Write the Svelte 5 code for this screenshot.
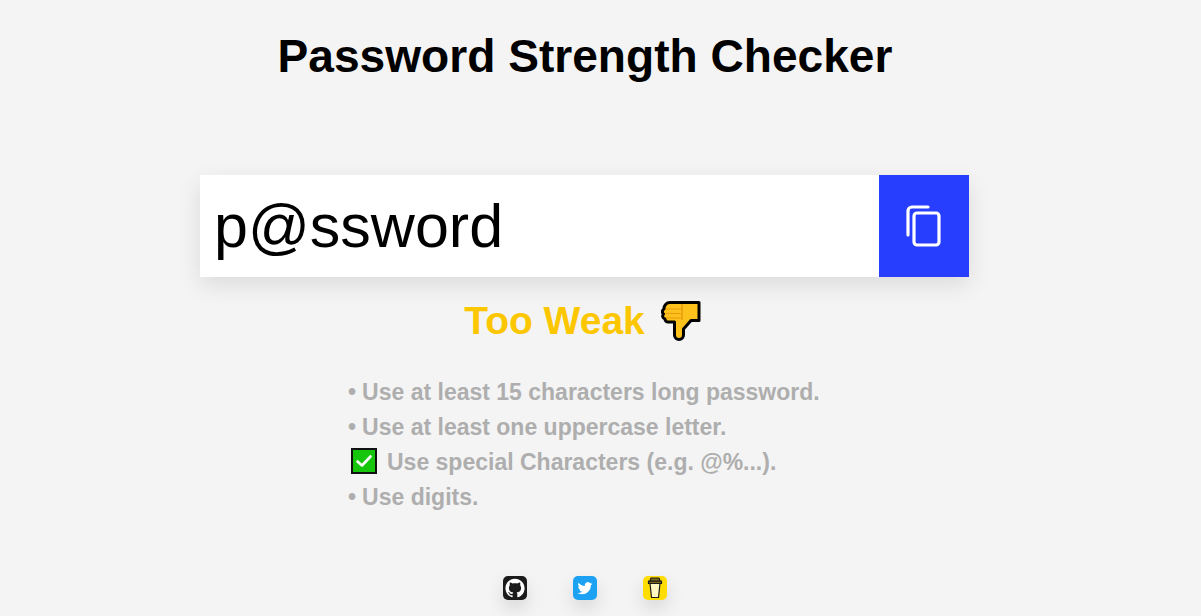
<script>
	const tips = [
		{ text: 'Use at least 15 characters long password.', done: false },
		{ text: 'Use at least one uppercase letter.', done: false },
		{ text: 'Use special Characters (e.g. @%...).', done: true },
		{ text: 'Use digits.', done: false }
	];
	let password = 'p@ssword';
</script>

<main>
	<h1>Password Strength Checker</h1>

	<div class="field">
		<input type="text" bind:value={password} />
		<button aria-label="Copy">
			<svg width="36" height="42" viewBox="0 0 36 42" fill="none" stroke="#fff" stroke-width="3.200" stroke-linecap="round" stroke-linejoin="round">
				<rect x="8" y="8" width="25" height="32" rx="3" />
				<path d="M2 30V6a4 4 0 0 1 4-4h16" />
			</svg>
		</button>
	</div>

	<div class="verdict">
		<span>Too Weak</span>
		<svg class="thumb" width="40" height="40" viewBox="0 0 40 40">
			<path d="M9 1.500H38V19.500H30L22.500 28V34a4.500 4.500 0 0 1-9 0V21H7a3 3 0 0 1-3-3 3 3 0 0 1-1.500-5 3 3 0 0 1 .5-5a6 6 0 0 1 6-6.500Z" fill="#fcc21b" stroke="#000" stroke-width="3" stroke-linejoin="round" />
			<path d="M5 8H20M4.500 12.500H20M5 17H20" stroke="#eb9a0c" stroke-width="1" />
			<path d="M21 3V19" stroke="#eb9a0c" stroke-width="1.500" />
		</svg>
	</div>

	<ul>
		{#each tips as tip}
			<li>
				{#if tip.done}
					<span class="check">
						<svg width="20" height="20" viewBox="0 0 20 20" fill="none" stroke="#fff" stroke-width="2.600" stroke-linecap="round" stroke-linejoin="round">
							<path d="M3.500 10.500L8 14.500L16.500 5.500" />
						</svg>
					</span>
				{:else}
					<span class="dot">•</span>
				{/if}
				{tip.text}
			</li>
		{/each}
	</ul>

	<div class="social">
		<a href="#github" class="gh" aria-label="GitHub">
			<svg width="24" height="24" viewBox="0 0 24 24">
				<path transform="translate(2.400 2.400) scale(.8)" fill="#fff" d="M12 .297c-6.630 0-12 5.373-12 12 0 5.303 3.438 9.800 8.205 11.385.6.113.82-.258.82-.577 0-.285-.01-1.040-.015-2.040-3.338.724-4.042-1.610-4.042-1.610C4.422 18.070 3.633 17.700 3.633 17.700c-1.087-.744.084-.729.084-.729 1.205.084 1.838 1.236 1.838 1.236 1.070 1.835 2.809 1.305 3.495.998.108-.776.417-1.305.76-1.605-2.665-.3-5.466-1.332-5.466-5.930 0-1.310.465-2.380 1.235-3.220-.135-.303-.54-1.523.105-3.176 0 0 1.005-.322 3.300 1.230.96-.267 1.980-.399 3-.405 1.020.006 2.040.138 3 .405 2.280-1.552 3.285-1.230 3.285-1.230.645 1.653.24 2.873.12 3.176.765.84 1.230 1.910 1.230 3.220 0 4.610-2.805 5.625-5.475 5.920.42.36.81 1.096.81 2.220 0 1.606-.015 2.896-.015 3.286 0 .315.21.69.825.57C20.565 22.092 24 17.592 24 12.297c0-6.627-5.373-12-12-12" />
			</svg>
		</a>
		<a href="#twitter" class="tw" aria-label="Twitter">
			<svg width="24" height="24" viewBox="0 0 24 24">
				<path transform="translate(4.500 4.800) scale(.62)" fill="#fff" d="M23.953 4.570a10 10 0 0 1-2.825.775 4.958 4.958 0 0 0 2.163-2.723c-.951.555-2.005.959-3.127 1.184a4.920 4.920 0 0 0-8.384 4.482C7.690 8.095 4.067 6.130 1.640 3.162a4.822 4.822 0 0 0-.666 2.475c0 1.710.87 3.213 2.188 4.096a4.904 4.904 0 0 1-2.228-.616v.06a4.923 4.923 0 0 0 3.946 4.827 4.996 4.996 0 0 1-2.212.085 4.936 4.936 0 0 0 4.604 3.417 9.867 9.867 0 0 1-6.102 2.105c-.39 0-.779-.023-1.170-.067a13.995 13.995 0 0 0 7.557 2.209c9.053 0 13.998-7.496 13.998-13.985 0-.21 0-.42-.015-.63A9.935 9.935 0 0 0 24 4.590z" />
			</svg>
		</a>
		<a href="#coffee" class="bmc" aria-label="Buy me a coffee">
			<svg width="24" height="24" viewBox="0 0 24 24" stroke="#1b1b1b" stroke-width="1.200" stroke-linejoin="round">
				<path d="M7 7.500H17L15.500 21.500H8.500Z" fill="#fff6c0" />
				<path d="M5.500 5H18.500V7.500H5.500Z" fill="#7d6a1c" />
				<path d="M8 2H16L17 5H7Z" fill="#7d6a1c" />
			</svg>
		</a>
	</div>
</main>

<style>
	:global(body) {
		margin: 0;
		background: #f4f4f4;
		font-family: 'Liberation Sans', Arial, sans-serif;
	}

	main {
		display: flex;
		flex-direction: column;
		align-items: center;
		box-sizing: border-box;
		height: 616px;
		padding-right: 32px;
		overflow: hidden;
	}

	h1 {
		margin: 30px 0 0 1px;
		font-size: 46.1px;
		line-height: 53px;
		font-weight: 700;
		color: #000;
	}

	.field {
		display: flex;
		width: 769px;
		height: 102px;
		margin: 92px 0 0;
		background: #fff;
		box-shadow: 0 8px 22px rgba(0, 0, 0, 0.1);
	}

	input {
		flex: 1;
		min-width: 0;
		border: 0;
		outline: 0;
		padding: 0 14px;
		font: 61px 'Liberation Sans', Arial, sans-serif;
		color: #000;
		background: transparent;
	}

	button {
		display: flex;
		align-items: center;
		justify-content: center;
		width: 90px;
		border: 0;
		padding: 0;
		background: #283eff;
	}

	.verdict {
		display: flex;
		align-items: center;
		gap: 16px;
		margin: 21px 4px 0 0;
		font-size: 39px;
		line-height: 46px;
		font-weight: 700;
		color: #fcc700;
	}

	ul {
		list-style: none;
		margin: 31px 0 0 348px;
		padding: 0;
		align-self: flex-start;
		font-size: 23px;
		line-height: 35px;
		font-weight: 700;
		color: #aeaeae;
	}

	li {
		display: flex;
		align-items: center;
		gap: 6px;
		height: 35px;
	}

	.check {
		display: flex;
		align-items: center;
		justify-content: center;
		box-sizing: border-box;
		width: 26px;
		height: 26px;
		margin: -3px 4px 0 3px;
		background: #16c60c;
		border: 2px solid #111;
	}

	.social {
		display: flex;
		gap: 46px;
		margin-top: 61px;
	}

	.social a {
		display: block;
		width: 24px;
		height: 24px;
		border-radius: 5px;
		box-shadow: 0 8px 18px rgba(0, 0, 0, 0.12);
	}

	.gh {
		background: #1b1b1b;
	}

	.tw {
		background: #1da1f2;
	}

	.bmc {
		background: #ffdd00;
	}
</style>
